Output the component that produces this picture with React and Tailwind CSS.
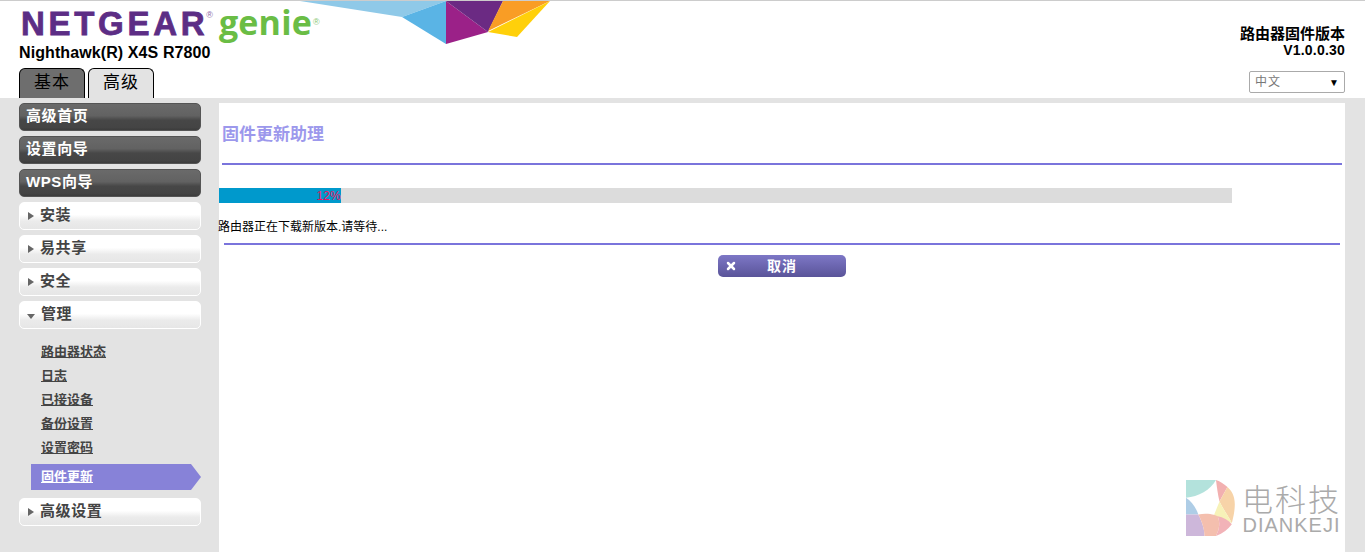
import React from 'react';
import { X } from 'lucide-react';

const cjk = "font-['Liberation_Sans','Noto_Sans_CJK_SC',sans-serif]";

const darkItems = ['高级首页', '设置向导', 'WPS向导'];
const subItems = ['路由器状态', '日志', '已接设备', '备份设置', '设置密码'];

function Arrow({ open = false }) {
  if (open) {
    return <span className="mt-[5px] ml-[7px] mr-[6px] h-0 w-0 border-x-[4px] border-t-[5px] border-x-transparent border-t-[#666]" />;
  }
  return <span className="mt-[2px] ml-[8px] mr-[6px] h-0 w-0 border-y-[4px] border-l-[6px] border-y-transparent border-l-[#666]" />;
}

function DarkButton({ label }) {
  return (
    <div className="flex h-[28px] items-center rounded-[5px] border border-[#555] bg-[linear-gradient(#6a6a6a_0%,#626262_45%,#474747_62%,#444_90%,#3c3c3c_100%)] pb-[2px] pl-[6px] text-[15px] font-bold tracking-[0.6px] text-white">
      {label}
    </div>
  );
}

function LightButton({ label, open }) {
  return (
    <div className="flex h-[28px] items-center rounded-[5px] border border-white bg-[linear-gradient(#fff_0%,#fff_45%,#ebebeb_70%,#e6e6e6_100%)] pb-[2px] text-[15px] font-bold tracking-[0.6px] text-[#444]">
      <Arrow open={open} />
      {label}
    </div>
  );
}

function Logo() {
  return (
    <div className="flex h-[42px] items-start">
      <span className="ml-[1px] mt-[3px] font-['Liberation_Sans',sans-serif] text-[33px] font-bold leading-[40px] tracking-[3.7px] text-[#5c2d85] [-webkit-text-stroke:0.8px_#5c2d85]">NETGEAR</span>
      <span className="-ml-[2px] mt-[10px] text-[9px] leading-none text-[#8a6aa6]">®</span>
      <span className="mt-[1px] ml-[6px] font-['Open_Sans','Liberation_Sans',sans-serif] text-[34px] font-bold leading-[40px] tracking-[0.2px] text-[#6abd45]">genie</span>
      <span className="mt-[17px] ml-[1px] text-[9px] leading-none text-[#8cc873]">®</span>
    </div>
  );
}

function HeaderArt() {
  return (
    <svg className="absolute left-[250px] -top-[1px]" width="310" height="46" viewBox="250 0 310 46">
      <polygon points="300,1 446,1 402,17" fill="#8fc9e8" />
      <polygon points="402,17 446,1 446,44" fill="#5ab4e5" />
      <polygon points="446,1 446,44 488,32" fill="#9b2188" />
      <polygon points="446,1 503,1 488,32" fill="#6b2a83" />
      <polygon points="503,1 550,1 488,31" fill="#f99d25" />
      <polygon points="550,1 517,37 488,32" fill="#ffd00a" />
    </svg>
  );
}

function Watermark() {
  return (
    <div className="absolute right-[24px] bottom-[16px] flex items-center gap-[4px]">
      <svg width="52" height="56" viewBox="0 0 59 57" preserveAspectRatio="none">
        <path d="M0 0H34C50 3 59 15 59 28C59 42 50 53 34 57H0Z" fill="#fff" />
        <path d="M0 0H34C28 10 14 17 0 18Z" fill="#b3e2dc" />
        <path d="M34 0C38 1 43 4 47 7L38 22C36 14 35 7 34 0Z" fill="#f2b0b0" />
        <path d="M47 7C54 13 59 20 52 44C48 36 42 30 38 22Z" fill="#f7d3a8" />
        <path d="M38 22C42 30 48 36 52 44L46 41C40 40 33 38 32 35Z" fill="#f7f2b8" />
        <path d="M0 18C7 22 11 28 14 35L0 35Z" fill="#aecde6" />
        <path d="M0 35H14C18 42 21 50 21 57H0Z" fill="#cdb7da" />
        <path d="M14 35C26 33 35 36 36 37C39 44 38 50 34 57H21C21 50 18 42 14 35Z" fill="#f4bfae" />
        <path d="M36 37C42 38 48 41 52 45C48 50 42 54 34 57C38 50 39 44 36 37Z" fill="#f2b3b8" />
      </svg>
      <div className="flex flex-col items-center">
        <span className="font-['Noto_Sans_CJK_SC',sans-serif] text-[31px] font-light leading-[34px] tracking-[2px] text-[#aaa]">电科技</span>
        <span className="font-['Liberation_Sans',sans-serif] text-[20px] leading-[20px] tracking-[1px] text-[#aaa]">DIANKEJI</span>
      </div>
    </div>
  );
}

export default function App() {
  return (
    <div className={`${cjk} relative h-[552px] w-[1365px] overflow-hidden bg-[#e3e3e3] text-black`}>
      {/* Header */}
      <header className="relative flex h-[98px] justify-between border-t border-[#ccc] bg-white px-[20px]">
        <HeaderArt />
        <div className="flex flex-col">
          <Logo />
          <div className="-ml-[1px] text-[16px] font-bold leading-[20px] tracking-[0.1px]">Nighthawk(R) X4S R7800</div>
          <div className="-ml-[1px] mt-[5px] flex gap-[3px]">
            <div className="flex h-[30px] w-[66px] items-center justify-center rounded-t-[6px] border border-b-0 border-black bg-[#6e6e6e] pb-[2px] text-[17px] tracking-[1px]">基本</div>
            <div className="flex h-[30px] w-[66px] items-center justify-center rounded-t-[6px] border border-b-0 border-black bg-[#e3e3e3] pb-[2px] text-[17px] tracking-[1px]">高级</div>
          </div>
        </div>
        <div className="flex flex-col items-end">
          <div className="mt-[24px] text-[15px] font-bold leading-[18px]">路由器固件版本</div>
          <div className="text-[14px] font-bold leading-[14px] tracking-[0.2px]">V1.0.0.30</div>
          <div className="mt-[14px] flex h-[22px] w-[96px] items-center justify-between rounded-[2px] border border-[#aaa] pl-[5px] pr-[4px] text-[12px] tracking-[1px] text-[#777]">
            中文
            <span className="text-[10px] text-black">▼</span>
          </div>
        </div>
      </header>

      <div className="flex gap-[18px] pl-[19px] pt-[5px]">
        {/* Sidebar */}
        <nav className="flex w-[182px] flex-col gap-[5px]">
          {darkItems.map((label) => <DarkButton key={label} label={label} />)}
          {['安装', '易共享', '安全'].map((label) => <LightButton key={label} label={label} />)}
          <LightButton label="管理" open />
          <div className="flex flex-col pl-[12px] pt-[6px]">
            {subItems.map((label) => (
              <a key={label} className="flex h-[24px] items-center pl-[10px] text-[13px] font-bold text-[#444] underline">{label}</a>
            ))}
            <div className="mt-[4px] flex h-[26px] w-[170px] items-center bg-[#8782d8] pl-[10px] text-[13px] font-bold text-white underline [clip-path:polygon(0_0,160px_0,100%_50%,160px_100%,0_100%)]">
              固件更新
            </div>
          </div>
          <div className="mt-[3px]">
            <LightButton label="高级设置" />
          </div>
        </nav>

        {/* Content */}
        <main className="h-[449px] w-[1126px] bg-white">
          <h1 className="pl-[3px] pt-[22px] text-[17px] font-bold leading-[20px] text-[#9c98ec]">固件更新助理</h1>
          <div className="mx-[3px] mt-[18px] h-[2px] bg-[#7a74dc]" />
          <div className="mt-[23px] h-[15px] w-[1013px] bg-[#dcdcdc]">
            <div className="flex h-full w-[122px] items-center justify-end bg-[#0099cc] font-['Liberation_Sans',sans-serif] text-[12px] leading-none tracking-[0.2px] text-[#f01060]">12%</div>
          </div>
          <p className="-ml-[1px] mt-[16px] text-[12px] leading-[17px]">路由器正在下载新版本.请等待...</p>
          <div className="mx-[5px] mt-[7px] h-[2px] bg-[#7a74dc]" />
          <div className="mt-[10px] flex justify-center">
            <button className="relative flex h-[22px] w-[128px] items-center justify-center rounded-[5px] bg-[linear-gradient(#7d77c6,#5a5499)] text-[14px] font-bold tracking-[1px] text-white">
              <X className="absolute left-[7px] top-[5px] h-[12px] w-[12px]" strokeWidth={5} />
              <span>取消</span>
            </button>
          </div>
        </main>
      </div>
      <Watermark />
    </div>
  );
}
